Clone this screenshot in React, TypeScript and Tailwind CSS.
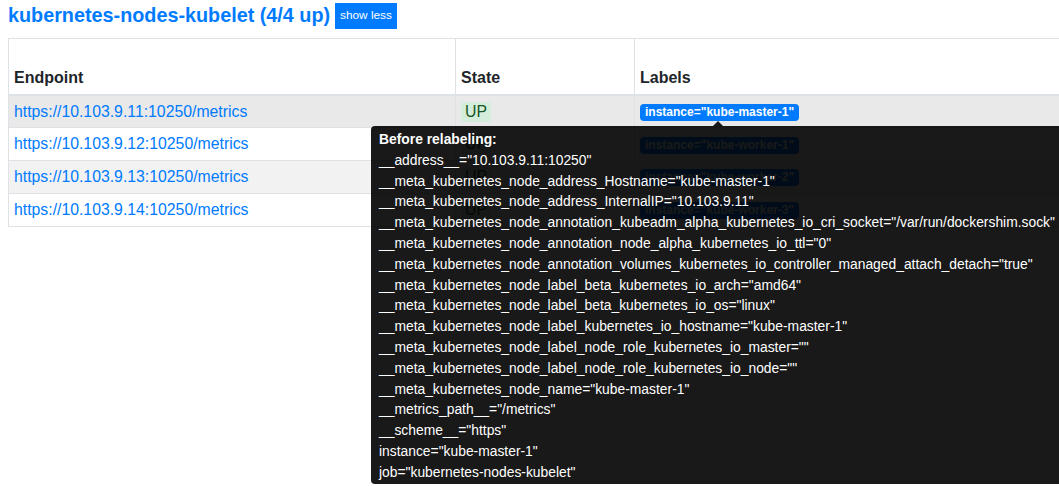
const targets = [
  { endpoint: "https://10.103.9.11:10250/metrics", instance: "kube-master-1" },
  { endpoint: "https://10.103.9.12:10250/metrics", instance: "kube-worker-1" },
  { endpoint: "https://10.103.9.13:10250/metrics", instance: "kube-worker-2" },
  { endpoint: "https://10.103.9.14:10250/metrics", instance: "kube-worker-3" },
];

const discovered = [
  '__address__="10.103.9.11:10250"',
  '__meta_kubernetes_node_address_Hostname="kube-master-1"',
  '__meta_kubernetes_node_address_InternalIP="10.103.9.11"',
  '__meta_kubernetes_node_annotation_kubeadm_alpha_kubernetes_io_cri_socket="/var/run/dockershim.sock"',
  '__meta_kubernetes_node_annotation_node_alpha_kubernetes_io_ttl="0"',
  '__meta_kubernetes_node_annotation_volumes_kubernetes_io_controller_managed_attach_detach="true"',
  '__meta_kubernetes_node_label_beta_kubernetes_io_arch="amd64"',
  '__meta_kubernetes_node_label_beta_kubernetes_io_os="linux"',
  '__meta_kubernetes_node_label_kubernetes_io_hostname="kube-master-1"',
  '__meta_kubernetes_node_label_node_role_kubernetes_io_master=""',
  '__meta_kubernetes_node_label_node_role_kubernetes_io_node=""',
  '__meta_kubernetes_node_name="kube-master-1"',
  '__metrics_path__="/metrics"',
  '__scheme__="https"',
  'instance="kube-master-1"',
  'job="kubernetes-nodes-kubelet"',
];

const rowBg = ["bg-[#e9e9e9]", "bg-white", "bg-[#f2f2f2]", "bg-white"];

const App = () => {
  return (
    <div
      className="relative h-[486px] w-full overflow-hidden bg-white text-[#212529]"
      style={{ fontFamily: '"Liberation Sans", Arial, sans-serif' }}
    >
      <div className="flex items-center h-[26px] mt-[3px] pl-2 gap-[5px]">
        <span className="text-[19.8px] font-bold text-[#007bff] leading-none">
          kubernetes-nodes-kubelet (4/4 up)
        </span>
        <button className="h-[26px] px-[5px] bg-[#007bff] text-white text-[11.8px] leading-none">
          show less
        </button>
      </div>

      <table className="ml-2 mt-[9px] w-[1300px] border-collapse table-fixed">
        <colgroup>
          <col className="w-[447px]" />
          <col className="w-[179px]" />
          <col />
        </colgroup>
        <thead>
          <tr>
            {["Endpoint", "State", "Labels"].map((h) => (
              <th
                key={h}
                className="h-[56px] align-bottom text-left font-bold text-[16px] leading-6 px-[5px] pb-[4px] border border-[#dee2e6] border-b-2"
              >
                {h}
              </th>
            ))}
          </tr>
        </thead>
        <tbody>
          {targets.map((t, i) => (
            <tr key={t.endpoint} className={rowBg[i]}>
              <td className="px-[5px] py-1 leading-[23.8px] text-[15.8px] border border-[#dee2e6]">
                <a className="text-[#007bff]">{t.endpoint}</a>
              </td>
              <td className="px-[5px] py-1 leading-[23.8px] border border-[#dee2e6]">
                <span className="inline-block px-[4px] rounded text-[15.8px] leading-5 bg-[#d4edda] text-[#155724]">
                  UP
                </span>
              </td>
              <td className="px-[5px] py-1 leading-[23.8px] border border-[#dee2e6]">
                <span className="inline-block px-[5px] py-[2px] rounded text-[12px] font-bold leading-[13px] bg-[#007bff] text-white align-middle">
                  instance="{t.instance}"
                </span>
              </td>
            </tr>
          ))}
        </tbody>
      </table>

      {/* tooltip for the hovered label */}
      <div className="absolute left-[713px] top-[121px] w-0 h-0 border-x-[5px] border-b-[5px] border-x-transparent border-b-black/90" />
      <div className="absolute left-[371px] top-[126px] rounded bg-black/90 text-white text-[13.85px] leading-[20.8px] px-2 pt-[3px] pb-px whitespace-nowrap text-left">
        <div className="font-bold">Before relabeling:</div>
        {discovered.map((l) => (
          <div key={l}>{l}</div>
        ))}
      </div>
    </div>
  );
};

export default App;
